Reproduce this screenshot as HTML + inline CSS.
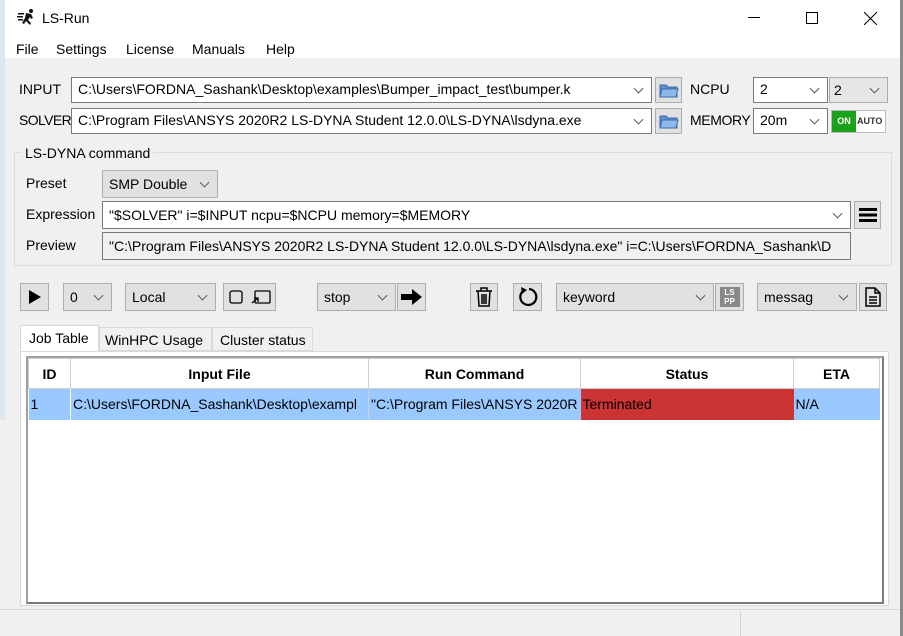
<!DOCTYPE html>
<html><head><style>
*{box-sizing:border-box;margin:0;padding:0}
body{width:903px;height:636px;background:#f0f0f0;font-family:"Liberation Sans",sans-serif;font-size:14px;color:#000;position:relative;overflow:hidden}
.a{position:absolute;white-space:nowrap}
.f{position:absolute;background:#fff;border:1px solid #7a7a7a;padding:0 6px;line-height:23px;overflow:hidden;white-space:nowrap}
.g{position:absolute;background:#e1e1e1;border:1px solid #adadad;padding:0 6px;line-height:24px;white-space:nowrap;overflow:hidden}
.c::after{content:"";position:absolute;right:9px;top:50%;width:6px;height:6px;border-right:1px solid #555;border-bottom:1px solid #555;transform:translateY(-70%) rotate(45deg)}
.b{position:absolute;background:#e1e1e1;border:1px solid #adadad;display:flex;align-items:center;justify-content:center}
th,td{font-size:14px}
</style></head><body>
<div class="a" style="left:0;top:0;width:903px;height:58px;background:#fff"></div>
<div class="a" style="left:0;top:0;width:5px;height:420px;background:#dfe6ee"></div>
<div class="a" style="left:900px;top:0;width:3px;height:636px;background:#8a8a8a"></div>
<svg class="a" style="left:17px;top:8px" width="20" height="18" viewBox="0 0 20 18"><g fill="#111"><circle cx="14" cy="3" r="2"/><path d="M9 5l5 1 2 4-2 1-1-2-2 3 3 3-1 2-4-4-2 3-2-1 3-5z"/><rect x="1" y="5" width="6" height="1.5"/><rect x="0" y="8" width="6" height="1.5"/><rect x="1" y="11" width="5" height="1.5"/></g></svg>
<div class="a" style="left:42px;top:10px">LS-Run</div>
<div class="a" style="left:748px;top:17px;width:12px;height:1px;background:#000"></div>
<div class="a" style="left:806px;top:12px;width:12px;height:12px;border:1px solid #000"></div>
<svg class="a" style="left:864px;top:12px" width="13" height="13"><path d="M0 0L13 13M13 0L0 13" stroke="#000" stroke-width="1"/></svg>
<div class="a" style="left:16px;top:41px">File</div>
<div class="a" style="left:56px;top:41px">Settings</div>
<div class="a" style="left:126px;top:41px">License</div>
<div class="a" style="left:192px;top:41px">Manuals</div>
<div class="a" style="left:266px;top:41px">Help</div>

<div class="a" style="left:19px;top:81px">INPUT</div>
<div class="f c" style="left:71px;top:77px;width:581px;height:26px">C:\Users\FORDNA_Sashank\Desktop\examples\Bumper_impact_test\bumper.k</div>
<div class="a" style="left:19px;top:112px;letter-spacing:-0.6px">SOLVER</div>
<div class="f c" style="left:71px;top:108px;width:581px;height:26px">C:\Program Files\ANSYS 2020R2 LS-DYNA Student 12.0.0\LS-DYNA\lsdyna.exe</div>
<div class="b" style="left:655px;top:77px;width:27px;height:26px"><svg width="20" height="16"><path d="M1 3h6l2 2h9v10H1z" fill="#5b8fd0" stroke="#3a6aa8"/><path d="M3 7h16l-2 8H1z" fill="#8fb8ea" stroke="#3a6aa8"/></svg></div>
<div class="b" style="left:655px;top:108px;width:27px;height:26px"><svg width="20" height="16"><path d="M1 3h6l2 2h9v10H1z" fill="#5b8fd0" stroke="#3a6aa8"/><path d="M3 7h16l-2 8H1z" fill="#8fb8ea" stroke="#3a6aa8"/></svg></div>
<div class="a" style="left:690px;top:81px">NCPU</div>
<div class="a" style="left:690px;top:112px;letter-spacing:-0.4px">MEMORY</div>
<div class="f c" style="left:753px;top:77px;width:75px;height:26px">2</div>
<div class="g c" style="left:829px;top:77px;width:59px;height:26px;background:#e6e6e6;padding-left:4px">2</div>
<div class="f c" style="left:753px;top:108px;width:75px;height:26px">20m</div>
<div class="a" style="left:831px;top:110px;width:55px;height:23px;border:1px solid #bbb;background:#fff;font-size:9px;font-weight:bold"><span style="position:absolute;left:0;top:0;width:24px;height:21px;background:#1aa31a;color:#fff;text-align:center;line-height:21px">ON</span><span style="position:absolute;left:25px;top:0;line-height:21px;color:#333">AUTO</span></div>

<div class="a" style="left:14px;top:152px;width:878px;height:114px;border:1px solid #dcdcdc"></div>
<div class="a" style="left:22px;top:145px;background:#f0f0f0;padding:0 3px">LS-DYNA command</div>
<div class="a" style="left:26px;top:175px">Preset</div>
<div class="g c" style="left:102px;top:170px;width:116px;height:28px;line-height:26px;padding-right:24px">SMP Double</div>
<div class="a" style="left:26px;top:206px">Expression</div>
<div class="f c" style="left:102px;top:201px;width:749px;height:28px;line-height:26px">"$SOLVER" i=$INPUT ncpu=$NCPU memory=$MEMORY</div>
<div class="b" style="left:854px;top:201px;width:27px;height:28px"><svg width="18" height="14"><rect y="0" width="18" height="3"/><rect y="5.5" width="18" height="3"/><rect y="11" width="18" height="3"/></svg></div>
<div class="a" style="left:26px;top:237px">Preview</div>
<div class="f" style="left:102px;top:232px;width:749px;height:28px;line-height:26px;background:#f0f0f0">"C:\Program Files\ANSYS 2020R2 LS-DYNA Student 12.0.0\LS-DYNA\lsdyna.exe" i=C:\Users\FORDNA_Sashank\D</div>

<div class="b" style="left:20px;top:283px;width:29px;height:28px"><svg width="14" height="14"><path d="M1 0L13 7L1 14z"/></svg></div>
<div class="g c" style="left:63px;top:283px;width:49px;height:28px;line-height:26px">0</div>
<div class="g c" style="left:125px;top:283px;width:91px;height:28px;line-height:26px">Local</div>
<div class="b" style="left:223px;top:283px;width:53px;height:28px;gap:8px"><svg width="14" height="14"><rect x="1" y="1" width="12" height="12" rx="2" fill="none" stroke="#000" stroke-width="1.3"/></svg><svg width="20" height="16"><rect x="4" y="2" width="15" height="12" rx="1" fill="none" stroke="#000" stroke-width="1.3"/><path d="M1 14l6-5M3 9h4v4" fill="none" stroke="#000" stroke-width="1.3"/></svg></div>
<div class="g c" style="left:317px;top:283px;width:79px;height:28px;line-height:26px">stop</div>
<div class="b" style="left:397px;top:283px;width:29px;height:28px"><svg width="22" height="16"><path d="M0 5h11V0l10 8-10 8v-5H0z"/></svg></div>
<div class="b" style="left:470px;top:283px;width:28px;height:28px"><svg width="18" height="20"><path d="M1 4h16M6 4V1h6v3M3 4l1 15h10l1-15M7 7v10M9 7v10M11 7v10" fill="none" stroke="#000" stroke-width="1.5"/></svg></div>
<div class="b" style="left:513px;top:283px;width:29px;height:28px"><svg width="22" height="22"><path d="M6 5A8 8 0 1 0 12 3" fill="none" stroke="#000" stroke-width="2.2"/><path d="M4 1l6 3-5 4z"/></svg></div>
<div class="g c" style="left:556px;top:283px;width:158px;height:28px;line-height:26px">keyword</div>
<div class="b" style="left:715px;top:283px;width:29px;height:28px"><div style="width:20px;height:20px;background:#888;color:#fff;font-size:8px;font-weight:bold;line-height:9px;text-align:center;padding-top:1px">LS<br>PP</div></div>
<div class="g c" style="left:757px;top:283px;width:100px;height:28px;line-height:26px">messag</div>
<div class="b" style="left:859px;top:283px;width:28px;height:28px"><svg width="16" height="20"><path d="M1 1h9l5 5v13H1z M10 1v5h5M4 10h8M4 13h8M4 16h8" fill="none" stroke="#000" stroke-width="1.5"/></svg></div>

<div class="a" style="left:20px;top:325px;width:79px;height:27px;background:#fff;border:1px solid #d9d9d9;border-bottom:none;padding:4px 0 0 8px">Job Table</div>
<div class="a" style="left:99px;top:327px;width:113px;height:24px;border:1px solid #d9d9d9;padding:4px 0 0 5px">WinHPC Usage</div>
<div class="a" style="left:212px;top:327px;width:101px;height:24px;border:1px solid #d9d9d9;padding:4px 0 0 7px">Cluster status</div>
<div class="a" style="left:20px;top:351px;width:869px;height:255px;background:#fff;border:1px solid #d9d9d9"></div>
<div class="a" style="left:26px;top:356px;width:858px;height:248px;background:#fff;border:2px solid #7a7a7a;border-top-color:#a0a0a0;border-left-color:#a0a0a0;overflow:hidden">
<table style="border-collapse:collapse;table-layout:fixed;position:absolute;left:0;top:0">
<tr style="height:30px;font-weight:bold;text-align:center"><td style="width:42px;border:1px solid #d0d0d0">ID</td><td style="width:298px;border:1px solid #d0d0d0">Input File</td><td style="width:212px;border:1px solid #d0d0d0">Run Command</td><td style="width:213px;border:1px solid #d0d0d0">Status</td><td style="width:86px;border:1px solid #d0d0d0">ETA</td></tr>
<tr style="height:31px;background:#99c9ff;white-space:nowrap"><td style="padding-left:2px;border-right:1px solid #fff;overflow:hidden">1</td><td style="padding-left:2px;overflow:hidden">C:\Users\FORDNA_Sashank\Desktop\exampl</td><td style="padding-left:2px;overflow:hidden;border-left:1px solid #d0d0d0">"C:\Program Files\ANSYS 2020R</td><td style="background:#cc3333;padding-left:2px">Terminated</td><td style="padding-left:2px">N/A</td></tr>
</table></div>
<div class="a" style="left:0;top:609px;width:900px;height:1px;background:#dadada"></div>
<div class="a" style="left:740px;top:612px;width:1px;height:24px;background:#d0d0d0"></div>
</body></html>
